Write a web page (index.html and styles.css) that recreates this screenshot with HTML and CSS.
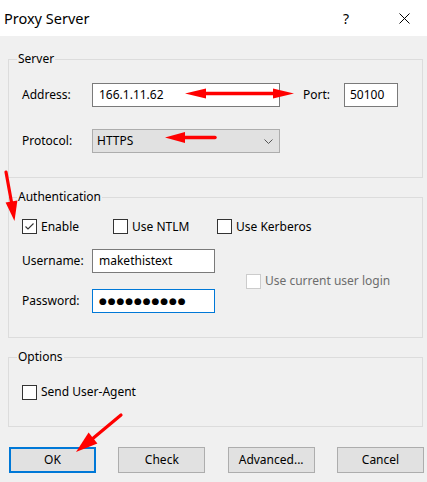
FILE: index.html
```html
<!DOCTYPE html>
<html>
<head>
<meta charset="utf-8">
<link rel="stylesheet" href="styles.css">
</head>
<body>
<div class="window">
  <div class="titlebar">
    <span class="title">Proxy Server</span>
    <span class="tbtn help">?</span>
    <span class="tbtn close"><svg width="11" height="11" viewBox="0 0 11 11"><path d="M0.5 0.5 L10.5 10.5 M10.5 0.5 L0.5 10.5" stroke="#000" stroke-width="1" fill="none"/></svg></span>
  </div>
  <div class="content">
    <fieldset class="group server">
      <legend>Server</legend>
      <div class="row">
        <span class="lbl lbl-addr">Address:</span>
        <div class="field field-addr">166.1.11.62</div>
        <span class="lbl lbl-port">Port:</span>
        <div class="field field-port">50100</div>
      </div>
      <div class="row row-proto">
        <span class="lbl lbl-addr">Protocol:</span>
        <div class="combo"><span>HTTPS</span><svg class="chev" width="9" height="5" viewBox="0 0 9 5"><path d="M0.5 0.5 L4.5 4.5 L8.5 0.5" stroke="#555" stroke-width="1" fill="none"/></svg></div>
      </div>
    </fieldset>

    <fieldset class="group auth">
      <legend>Authentication</legend>
      <div class="row cbrow">
        <label class="cb cb-enable"><span class="box"><svg width="13" height="13" viewBox="0 0 13 13"><path d="M2.5 6.5 L5 9 L10.5 3.5" stroke="#333" stroke-width="1.1" fill="none"/></svg></span>Enable</label>
        <label class="cb cb-ntlm"><span class="box"></span>Use NTLM</label>
        <label class="cb"><span class="box"></span>Use Kerberos</label>
      </div>
      <div class="credrow">
        <div class="creds">
          <div class="row">
            <span class="lbl lbl-addr">Username:</span>
            <div class="field field-user">makethistext</div>
          </div>
          <div class="row row-pass">
            <span class="lbl lbl-addr">Password:</span>
            <div class="field field-user focused"><span class="dots">●●●●●●●●●●</span></div>
          </div>
        </div>
        <label class="cb disabled"><span class="box"></span>Use current user login</label>
      </div>
    </fieldset>

    <fieldset class="group options">
      <legend>Options</legend>
      <label class="cb"><span class="box"></span>Send User-Agent</label>
    </fieldset>

    <div class="buttons">
      <button class="btn default">OK</button>
      <button class="btn">Check</button>
      <button class="btn">Advanced...</button>
      <button class="btn">Cancel</button>
    </div>
  </div>

  <svg class="arrows" width="427" height="482" viewBox="0 0 427 482">
    <g fill="#ff0000" stroke="#ff0000">
      <line x1="200" y1="93.5" x2="278" y2="93.5" stroke-width="3.5"/>
      <polygon points="185,93.5 206,88.5 206,98.5" stroke="none"/>
      <polygon points="294,93.5 273,88.5 273,98.5" stroke="none"/>
      <line x1="180" y1="137.5" x2="215" y2="137.5" stroke-width="3.5" stroke-linecap="round"/>
      <polygon points="165,137.5 185,132 185,143" stroke="none"/>
      <line x1="6" y1="172" x2="12" y2="205" stroke-width="3.2" stroke-linecap="round"/>
      <polygon points="14.5,221 5.6,202.5 17.4,200.5" stroke="none"/>
      <line x1="121" y1="415" x2="91" y2="440" stroke-width="3.2" stroke-linecap="round"/>
      <polygon points="76,452 88.6,432.6 97.4,443.4" stroke="none"/>
    </g>
  </svg>
</div>
</body>
</html>
```

FILE: styles.css
```css
* { box-sizing: border-box; }
html, body { margin: 0; padding: 0; }
body {
  width: 427px;
  height: 482px;
  overflow: hidden;
  background: #f0f0f0;
  font-family: "Noto Sans", "Open Sans", sans-serif;
  font-size: 12px;
  color: #000;
}
.window {
  position: relative;
  width: 427px;
  height: 482px;
  background: #f0f0f0;
}
.titlebar {
  height: 36px;
  background: #fff;
  display: flex;
  align-items: center;
}
.title {
  flex: 1;
  padding-left: 4px;
  font-size: 14.5px;
  line-height: 20px;
}
.tbtn {
  width: 46px;
  height: 36px;
  display: flex;
  align-items: center;
  justify-content: center;
}
.help {
  font-size: 14px;
  margin-right: 12px;
}
.close svg { display: block; }

.content {
  padding: 15px 0 0 0;
}
.group {
  margin: 0 4px 0 8px;
  border: 1px solid #dcdcdc;
  padding: 16px 0 24px 13px;
  min-width: 0;
}
.group legend {
  padding: 0 1px;
  margin-left: -5px;
  line-height: 16px;
  font-size: 12px;
}
.row {
  display: flex;
  align-items: center;
}
.lbl {
  line-height: 16px;
  white-space: nowrap;
}
.lbl-addr { width: 70px; }
.lbl-port { width: 41px; margin-left: 23px; }
.field {
  height: 24px;
  background: #fff;
  border: 1px solid #7a7a7a;
  padding: 0 6px;
  display: flex;
  align-items: center;
  line-height: 16px;
  white-space: nowrap;
}
.field-addr { width: 188px; }
.field-port { width: 54px; padding-left: 5px; }
.row-proto { margin-top: 22px; }
.combo {
  width: 188px;
  height: 24px;
  background: #e1e1e1;
  border: 1px solid #adadad;
  display: flex;
  align-items: center;
  justify-content: space-between;
  padding: 0 6px 0 4px;
  line-height: 16px;
}
.chev { display: block; }

.auth { margin-top: 11px; padding-top: 14px; padding-bottom: 24px; }
.cbrow { height: 15px; }
.cb {
  display: flex;
  align-items: center;
  line-height: 16px;
  white-space: nowrap;
}
.cb .box {
  width: 15px;
  height: 15px;
  border: 1px solid #333;
  background: #fff;
  margin-right: 4px;
  display: flex;
  align-items: center;
  justify-content: center;
  flex: none;
}
.cb .box svg { display: block; }
.cb-enable { width: 91px; }
.cb-ntlm { width: 104px; }
.credrow {
  display: flex;
  align-items: center;
  margin-top: 15px;
}
.field-user { width: 123px; }
.row-pass { margin-top: 16px; }
.focused { border-color: #0078d7; }
.dots {
  font-size: 9px;
  letter-spacing: 0.9px;
  line-height: 16px;
  font-family: "DejaVu Sans", sans-serif;
}
.cb.disabled { margin-left: 31px; color: #6d6d6d; }
.cb.disabled .box { border-color: #cccccc; }

.options { margin-top: 11px; padding-top: 19px; padding-bottom: 26px; }

.buttons {
  display: flex;
  justify-content: space-between;
  padding: 0 3px 0 9px;
  margin-top: 20px;
}
.btn {
  width: 87px;
  height: 26px;
  background: #e1e1e1;
  border: 1px solid #adadad;
  font-family: "Noto Sans", "Open Sans", sans-serif;
  font-size: 12px;
  color: #000;
  padding: 0;
  line-height: 16px;
  border-radius: 0;
}
.btn.default { border: 2px solid #0078d7; }

.arrows {
  position: absolute;
  top: 0;
  left: 0;
  pointer-events: none;
}
```
